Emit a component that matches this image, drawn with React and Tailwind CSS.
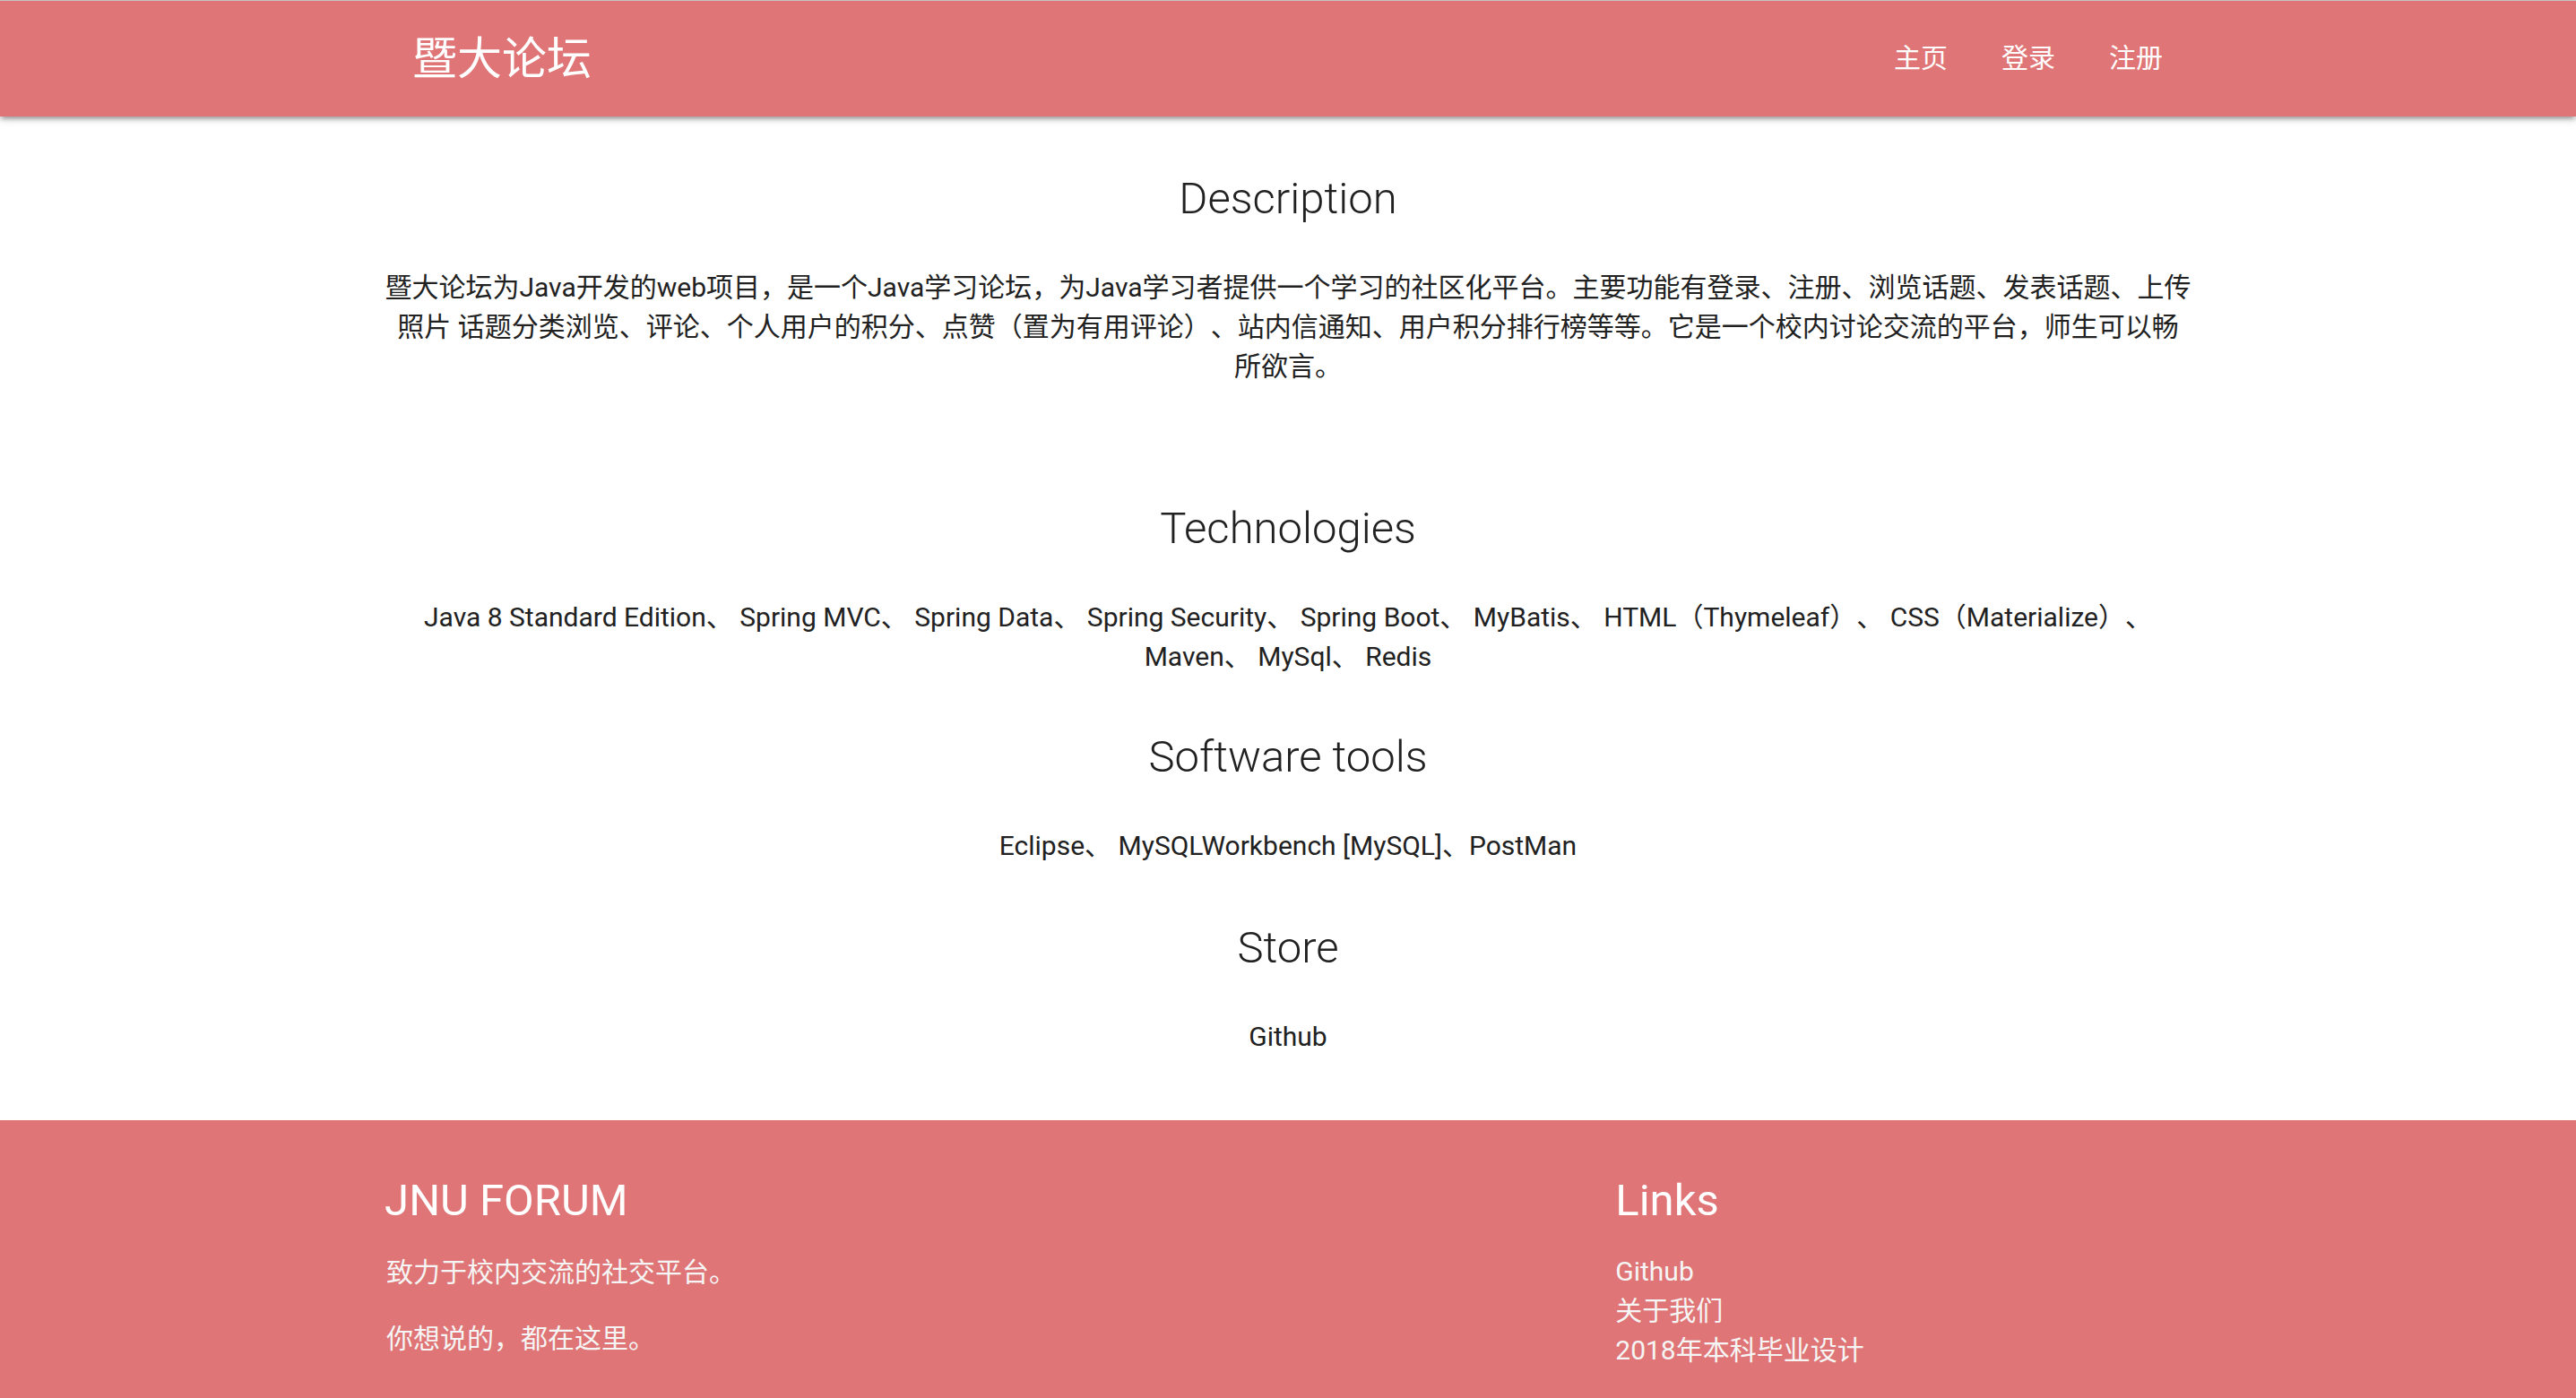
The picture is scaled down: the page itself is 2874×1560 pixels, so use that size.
import React from 'react';

const navLinks = ['主页', '登录', '注册'];

const sections = [
  {
    title: 'Description',
    lines: [
      '暨大论坛为Java开发的web项目，是一个Java学习论坛，为Java学习者提供一个学习的社区化平台。主要功能有登录、注册、浏览话题、发表话题、上传',
      '照片 话题分类浏览、评论、个人用户的积分、点赞（置为有用评论）、站内信通知、用户积分排行榜等等。它是一个校内讨论交流的平台，师生可以畅',
      '所欲言。',
    ],
    gap: 'mt-[65px]',
  },
  {
    title: 'Technologies',
    lines: [
      'Java 8 Standard Edition、 Spring MVC、 Spring Data、 Spring Security、 Spring Boot、 MyBatis、 HTML（Thymeleaf）、 CSS（Materialize）、',
      'Maven、 MySql、 Redis',
    ],
    gap: 'mt-[132px]',
  },
  {
    title: 'Software tools',
    lines: ['Eclipse、 MySQLWorkbench [MySQL]、PostMan'],
    gap: 'mt-[63px]',
  },
  {
    title: 'Store',
    lines: ['Github'],
    gap: 'mt-[65px]',
  },
];

export default function App() {
  return (
    <div className="min-h-screen bg-white font-[family-name:Roboto,'Noto_Sans_CJK_SC',sans-serif] text-[#212121] [text-spacing-trim:space-all]">
      {/* Navbar */}
      <nav className="relative z-10 h-[130px] border-t border-[#c4c4c4] bg-[#df7576] shadow-[0_4px_4px_0_rgba(0,0,0,0.14),0_6px_2px_-4px_rgba(0,0,0,0.12),0_2px_10px_0_rgba(0,0,0,0.2)]">
        <div className="mx-auto flex h-full w-[70%] items-center justify-between">
          <a className="pl-[29px] text-[50px] leading-none text-white">暨大论坛</a>
          <ul className="flex">
            {navLinks.map((l) => (
              <li key={l}>
                <a className="px-[30px] text-[30px] leading-none text-white">{l}</a>
              </li>
            ))}
          </ul>
        </div>
      </nav>

      {/* Main */}
      <main className="mx-auto w-[70%] text-center">
        {sections.map((s) => (
          <section key={s.title}>
            <h5 className={`${s.gap} text-[49px] font-light leading-[54px]`}>{s.title}</h5>
            <div className="mt-[50px] flex flex-col items-center text-[30px] leading-[44px]">
              {s.lines.map((line, i) => (
                <p key={i} className="whitespace-nowrap">{line}</p>
              ))}
            </div>
          </section>
        ))}
      </main>

      {/* Footer */}
      <footer className="mt-[71px] bg-[#df7576] pb-[80px] pt-[63px] text-white">
        <div className="mx-auto grid w-[70%] grid-cols-12 gap-x-[45px]">
          <div className="col-span-6">
            <h5 className="-ml-[2px] text-[49px] leading-[54px]">JNU FORUM</h5>
            <p className="mt-[30px] text-[30px] leading-[45px] text-[#f5f5f5]">致力于校内交流的社交平台。</p>
            <p className="mt-[29px] text-[30px] leading-[45px] text-[#f5f5f5]">你想说的，都在这里。</p>
          </div>
          <div className="col-span-4 col-start-9">
            <h5 className="text-[49px] leading-[54px]">Links</h5>
            <ul className="mt-[30px] text-[30px] leading-[44px] text-[#f5f5f5]">
              <li>Github</li>
              <li>关于我们</li>
              <li>2018年本科毕业设计</li>
            </ul>
          </div>
        </div>
      </footer>
    </div>
  );
}
